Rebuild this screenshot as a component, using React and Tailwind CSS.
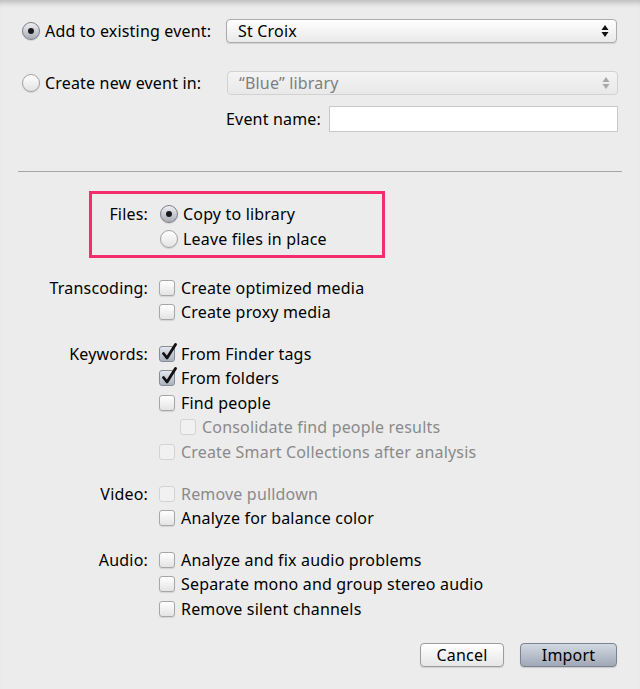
import React from "react";

function Radio({ checked }) {
  return (
    <span
      className={`flex h-[18px] w-[18px] shrink-0 items-center justify-center rounded-full border ${
        checked
          ? "border-[#7d7f85] bg-gradient-to-b from-[#eef0f4] to-[#a9adb6]"
          : "border-[#a3a3a3] bg-gradient-to-b from-[#ffffff] to-[#e3e3e3]"
      } shadow-[0_1px_1px_rgba(0,0,0,0.12)]`}
    >
      {checked && <span className="h-[6px] w-[6px] rounded-full bg-[#1a1a1a]" />}
    </span>
  );
}

function Checkbox({ checked, disabled }) {
  return (
    <span
      className={`relative h-[16px] w-[16px] shrink-0 rounded-[3px] border ${
        disabled
          ? "border-[#d3d3d3] bg-[#f1f1f1]"
          : checked
          ? "border-[#878c96] bg-gradient-to-b from-[#e4e8ee] to-[#aab2c0]"
          : "border-[#a7a7a7] bg-gradient-to-b from-[#ffffff] to-[#e4e4e4] shadow-[0_1px_1px_rgba(0,0,0,0.1)]"
      }`}
    >
      {checked && (
        <svg className="absolute left-[1px] top-[-4px]" width="17" height="18" viewBox="0 0 17 18">
          <path d="M2.5 10.5 L6 15 L14.5 1.5" fill="none" stroke="#111" strokeWidth="2.8" strokeLinecap="round" strokeLinejoin="round" />
        </svg>
      )}
    </span>
  );
}

function Arrows({ disabled }) {
  const c = disabled ? "#a8a8a8" : "#111";
  return (
    <svg width="8" height="14" viewBox="0 0 8 14">
      <path d="M4 1 L7.5 6 L0.5 6 Z" fill={c} />
      <path d="M4 13 L7.5 8 L0.5 8 Z" fill={c} />
    </svg>
  );
}

function Select({ value, disabled }) {
  return (
    <div
      className={`flex h-[24px] w-[391px] items-center justify-between rounded-[4px] border pl-[11px] pr-[7px] ${
        disabled
          ? "border-[#d2d2d2] bg-gradient-to-b from-[#f4f4f4] to-[#e9e9e9] text-[#7f7f7f]"
          : "border-[#acacac] bg-gradient-to-b from-[#ffffff] to-[#e9e9e9] text-black shadow-[0_1px_1px_rgba(0,0,0,0.12)]"
      }`}
    >
      <span>{value}</span>
      <Arrows disabled={disabled} />
    </div>
  );
}

function Row({ label, children, indent }) {
  return (
    <div className="flex h-[24.5px] items-center">
      <div className="w-[148px] shrink-0 text-right">{label}</div>
      <div className={`flex items-center gap-[6px] ${indent ? "pl-[32px]" : "pl-[11px]"}`}>{children}</div>
    </div>
  );
}

function Check({ label, text, checked, disabled, indent }) {
  return (
    <Row label={label} indent={indent}>
      <Checkbox checked={checked} disabled={disabled} />
      <span className={disabled ? "text-[#8a8a8a]" : ""}>{text}</span>
    </Row>
  );
}

export default function App() {
  return (
    <div
      className="h-[689px] w-[640px] overflow-hidden bg-[#ececec] text-[16px] leading-none tracking-[0.18px] text-black shadow-[inset_0_7px_6px_-5px_rgba(0,0,0,0.25)]"
      style={{ fontFamily: '"Noto Sans", "DejaVu Sans", sans-serif' }}
    >
      <div className="mt-[19px] flex h-[24px] items-center pl-[22px]">
        <div className="flex w-[204px] items-center gap-[5px]">
          <Radio checked />
          <span>Add to existing event:</span>
        </div>
        <Select value="St Croix" />
      </div>

      <div className="mt-[28px] flex h-[24px] items-center pl-[22px]">
        <div className="flex w-[205px] items-center gap-[5px]">
          <Radio />
          <span>Create new event in:</span>
        </div>
        <Select value="“Blue” library" disabled />
      </div>

      <div className="mt-[11px] flex h-[26px] items-center pl-[226px]">
        <span className="w-[103px]">Event name:</span>
        <div className="h-[26px] w-[289px] border border-[#c9c9c9] bg-white" />
      </div>

      <div className="ml-[18px] mt-[39px] h-px w-[604px] bg-[#a5a5a5]" />

      <div className="ml-[89px] mt-[19px] h-[67px] w-[296px] border-[3px] border-[#f52d6c] pt-[7.75px]">
        <div className="flex h-[24.5px] items-center">
          <div className="w-[56px] text-right">Files:</div>
          <div className="flex items-center gap-[5px] pl-[12px]">
            <Radio checked />
            <span>Copy to library</span>
          </div>
        </div>
        <div className="flex h-[24.5px] items-center">
          <div className="w-[56px]" />
          <div className="flex items-center gap-[5px] pl-[12px]">
            <Radio />
            <span>Leave files in place</span>
          </div>
        </div>
      </div>

      <div className="mt-[17.5px]">
        <Check label="Transcoding:" text="Create optimized media" />
        <Check text="Create proxy media" />
      </div>

      <div className="mt-[17px]">
        <Check label="Keywords:" text="From Finder tags" checked />
        <Check text="From folders" checked />
        <Check text="Find people" />
        <Check text="Consolidate find people results" disabled indent />
        <Check text="Create Smart Collections after analysis" disabled />
      </div>

      <div className="mt-[17.5px]">
        <Check label="Video:" text="Remove pulldown" disabled />
        <Check text="Analyze for balance color" />
      </div>

      <div className="mt-[17px]">
        <Check label="Audio:" text="Analyze and fix audio problems" />
        <Check text="Separate mono and group stereo audio" />
        <Check text="Remove silent channels" />
      </div>

      <div className="mt-[21.75px] flex justify-end gap-[16px] pr-[23px]">
        <button className="h-[24px] w-[84px] rounded-[4px] border border-[#9c9c9c] bg-gradient-to-b from-[#ffffff] to-[#e6e6e6] shadow-[0_1px_1px_rgba(0,0,0,0.12)]">
          Cancel
        </button>
        <button className="h-[24px] w-[97px] rounded-[4px] border border-[#7c8390] bg-gradient-to-b from-[#d3d9e2] to-[#9fa8b6] shadow-[0_1px_1px_rgba(0,0,0,0.15)]">
          Import
        </button>
      </div>
    </div>
  );
}
